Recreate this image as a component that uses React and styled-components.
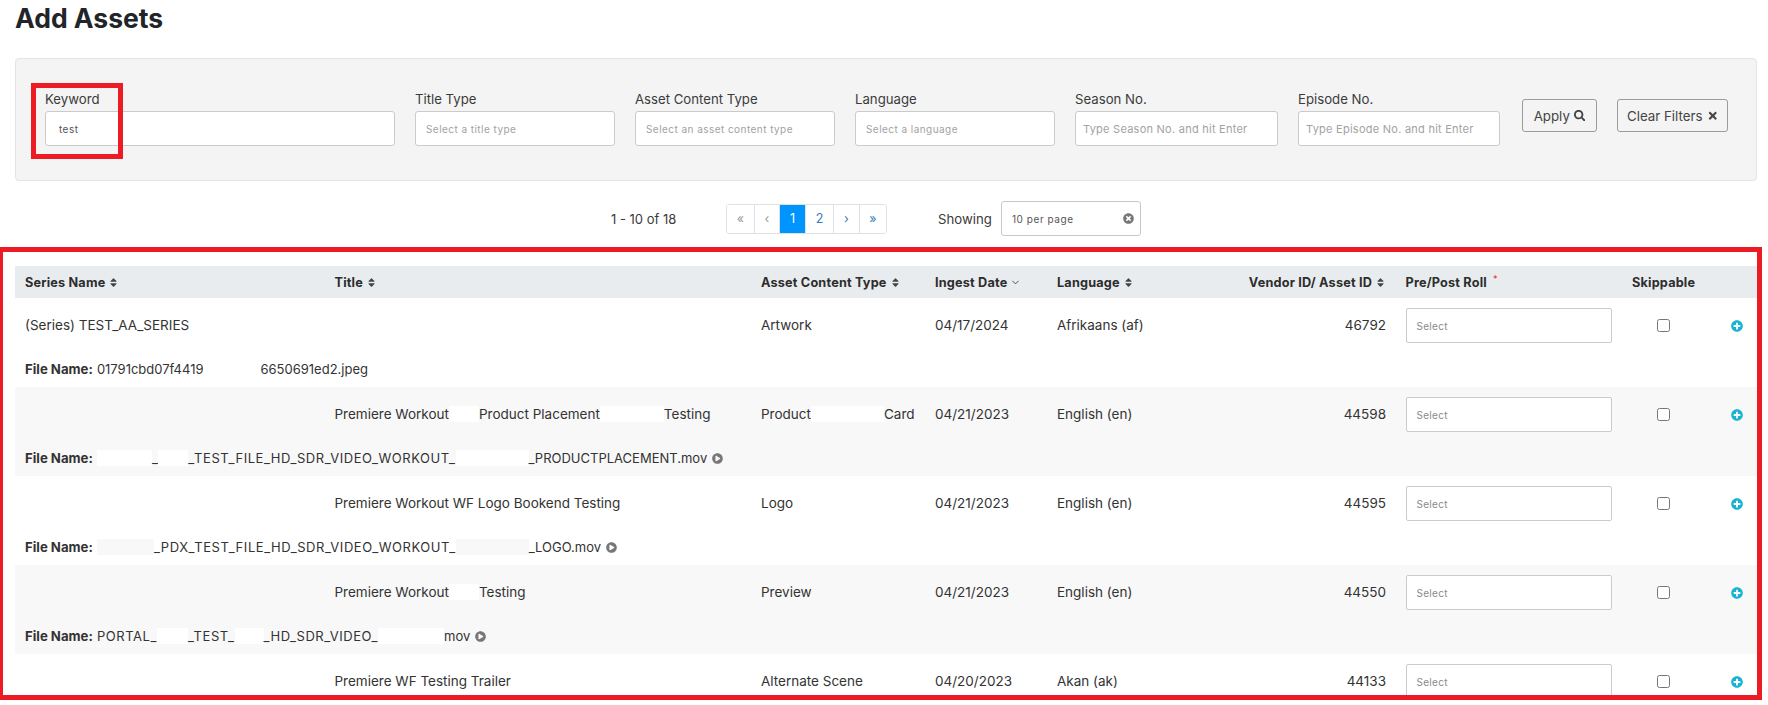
import React from 'react';
import styled, { createGlobalStyle } from 'styled-components';
import { FaSort, FaSearch, FaTimes, FaPlusCircle, FaPlayCircle, FaTimesCircle } from 'react-icons/fa';
import { LuChevronDown } from 'react-icons/lu';

const Global = createGlobalStyle`
  html, body { margin: 0; padding: 0; background: #fff; overflow: hidden; }
  body { font-family: Inter, "Open Sans", sans-serif; color: #333; }
  * { box-sizing: border-box; }
`;
const Page = styled.div`width: 1768px; height: 705px; overflow: hidden;`;
const Heading = styled.h1`
  margin: 0; height: 58px; padding: 2px 0 0 15px;
  font-size: 26.5px; line-height: 32px; font-weight: 700; color: #212529;
`;
const Panel = styled.section`
  position: relative; display: flex; align-items: flex-start;
  margin-left: 15px; width: 1742px; height: 123px; padding: 32px 0 0 29px;
  background: #f4f4f4; border: 1px solid #e4e4e4; border-radius: 4px;
`;
const Field = styled.div`
  width: ${p => p.$w}px; margin-right: ${p => p.$gap ?? 20}px;
  display: flex; flex-direction: column; gap: 3px;
`;
const Label = styled.label`font-size: 13.2px; line-height: 17px; color: #3b3b3b; white-space: nowrap;`;
const Control = styled.div`
  height: 35px; display: flex; align-items: center; padding-left: ${p => p.$pad ?? 10}px;
  background: #fff; border: 1px solid #cbcbcb; border-radius: 3px;
  font-size: ${p => p.$fs ?? 10}px; letter-spacing: ${p => p.$ls ?? 0.45}px;
  color: ${p => p.$dark ? '#555' : '#a2a2a2'}; white-space: nowrap; overflow: hidden;
`;
const GhostButton = styled.button`
  height: 33px; width: ${p => p.$w}px; margin: 8px ${p => p.$gap ?? 0}px 0 0; padding: 0;
  display: flex; align-items: center; justify-content: center; gap: 4px;
  background: transparent; border: 1px solid #9b9b9b; border-radius: 3px;
  font-family: inherit; font-size: 13.3px; color: #444;
  svg { font-size: 11.5px; flex: none; }
`;
const Highlight = styled.div`
  position: absolute; left: 15px; top: 24px; width: 92px; height: 76px;
  border: 5px solid #ed1c24; pointer-events: none;
`;
const PagerRow = styled.div`
  display: flex; align-items: center; height: 35px; margin-top: 20px; padding-left: 611px;
  font-size: 13px; color: #3a3a3a;
`;
const Range = styled.span`width: 115px; white-space: nowrap;`;
const Pager = styled.div`
  display: flex; height: 30px; width: 161px; border: 1px solid #dee2e6; border-radius: 3px; overflow: hidden;
`;
const PageCell = styled.span`
  width: ${p => p.$w}px; display: flex; align-items: center; justify-content: center;
  border-right: 1px solid #dee2e6; font-size: 12.5px;
  color: ${p => p.$active ? '#fff' : p.$muted ? '#999' : '#3a7bbd'};
  background: ${p => p.$active ? '#0094ff' : '#fff'};
  &:last-child { border-right: 0; }
`;
const Showing = styled.span`margin-left: 51px; width: 63px; font-size: 13.2px;`;
const PerPage = styled.div`
  position: relative; width: 140px; height: 35px; padding-left: 10px; display: flex; align-items: center;
  border: 1px solid #c8c8c8; border-radius: 3px; font-size: 10px; letter-spacing: .55px; color: #555;
  svg { position: absolute; right: 6px; top: 11px; font-size: 11px; color: #777; }
`;
const Frame = styled.section`
  width: 1762px; height: 453px; margin-top: 11px; padding: 14px 0 0 12px; overflow: hidden;
  border: solid #ed1c24; border-width: 5px 5px 5px 3px;
`;
const cols = '309.5px 426.5px 174px 122px 140px 208.5px 226.5px 85px 1fr';
const HeaderRow = styled.div`
  display: grid; grid-template-columns: ${cols}; align-items: center; height: 32px; padding-left: 10px;
  background: #e9ecef; font-size: 12.7px; font-weight: 700; letter-spacing: .18px; color: #2d2d2d;
`;
const HeadCell = styled.div`
  display: flex; align-items: center; gap: 3px; white-space: nowrap;
  ${p => p.$right && 'justify-content: flex-end; padding-right: 19.5px;'}
  svg { font-size: 11px; color: #444; flex: none; }
`;
const Star = styled.sup`color: #ed1c24; font-size: 9px; margin: -8px 0 0 3px; font-weight: 400;`;
const Row = styled.div`
  height: 89px; padding-left: 10px; background: ${p => p.$stripe ? '#f8f8f8' : '#fff'};
`;
const MainLine = styled.div`
  display: grid; grid-template-columns: ${cols}; align-items: center; height: 55px;
  font-size: 13.5px; color: #333;
`;
const Cell = styled.div`
  white-space: nowrap; padding-bottom: 2px;
  ${p => p.$right && 'text-align: right; padding-right: 19.5px;'}
`;
const SplitCell = styled.div`display: flex; align-items: center; white-space: nowrap; padding-bottom: 2px;`;
const RowSelect = styled.div`
  width: 206.5px; height: 35px; display: flex; align-items: center; padding-left: 10px;
  background: #fff; border: 1px solid #cbcbcb; border-radius: 2px; font-size: 10px; letter-spacing: .3px; color: #8a8a8a;
`;
const Check = styled.input.attrs({ type: 'checkbox' })`
  width: 13px; height: 13px; margin: 0 0 0 25px; accent-color: #555;
`;
const Add = styled.span`
  display: flex; justify-content: flex-end; padding-right: 14px; font-size: 12px; color: #17b4d2;
`;
const FileLine = styled.div`
  display: flex; align-items: center; height: 30px; margin-top: 1px; font-size: 13px; color: #333; white-space: nowrap;
  b { font-weight: 700; font-size: 13.2px; margin-right: 4px; }
`;
const Caps = styled.span`letter-spacing: .55px;`;
const Redact = styled.span`
  display: inline-block; flex: none; width: ${p => p.$w}px; height: 16px;
  background: ${p => p.$tone ?? '#fff'};
`;
const Play = styled(FaPlayCircle)`margin-left: 5px; font-size: 11px; color: #777;`;

const sortIcon = <FaSort />;

const Controls = () => (
  <><RowSelect>Select</RowSelect><Check /><Add><FaPlusCircle /></Add></>
);

function Rows() {
  return (
    <>
      <Row>
        <MainLine>
          <Cell>(Series) TEST_AA_SERIES</Cell><Cell /><Cell>Artwork</Cell><Cell>04/17/2024</Cell><Cell>Afrikaans (af)</Cell>
          <Cell $right>46792</Cell><Controls />
        </MainLine>
        <FileLine><b>File Name:</b>01791cbd07f4419<Redact $w={57} />6650691ed2.jpeg</FileLine>
      </Row>
      <Row $stripe>
        <MainLine>
          <Cell /><SplitCell>Premiere Workout<Redact $w={30} />Product Placement<Redact $w={64} />Testing</SplitCell>
          <SplitCell>Product<Redact $w={73} />Card</SplitCell><Cell>04/21/2023</Cell><Cell>English (en)</Cell>
          <Cell $right>44598</Cell><Controls />
        </MainLine>
        <FileLine><b>File Name:</b><Redact $w={55} /><Caps>_</Caps><Redact $w={30} /><Caps>_TEST_FILE_HD_SDR_VIDEO_WORKOUT_</Caps><Redact $w={73} />_PRODUCTPLACEMENT.mov<Play /></FileLine>
      </Row>
      <Row>
        <MainLine>
          <Cell /><Cell>Premiere Workout WF Logo Bookend Testing</Cell><Cell>Logo</Cell><Cell>04/21/2023</Cell><Cell>English (en)</Cell>
          <Cell $right>44595</Cell><Controls />
        </MainLine>
        <FileLine><b>File Name:</b><Redact $w={57} $tone="#f8f8f8" /><Caps>_PDX_TEST_FILE_HD_SDR_VIDEO_WORKOUT_</Caps><Redact $w={73} $tone="#f8f8f8" />_LOGO.mov<Play /></FileLine>
      </Row>
      <Row $stripe>
        <MainLine>
          <Cell /><SplitCell>Premiere Workout<Redact $w={30} />Testing</SplitCell><Cell>Preview</Cell><Cell>04/21/2023</Cell><Cell>English (en)</Cell>
          <Cell $right>44550</Cell><Controls />
        </MainLine>
        <FileLine><b>File Name:</b><Caps>PORTAL_</Caps><Redact $w={31} /><Caps>_TEST_</Caps><Redact $w={29} /><Caps>_HD_SDR_VIDEO_</Caps><Redact $w={66} />mov<Play /></FileLine>
      </Row>
      <Row>
        <MainLine>
          <Cell /><Cell>Premiere WF Testing Trailer</Cell><Cell>Alternate Scene</Cell><Cell>04/20/2023</Cell><Cell>Akan (ak)</Cell>
          <Cell $right>44133</Cell><Controls />
        </MainLine>
      </Row>
    </>
  );
}

export default function App() {
  return (
    <Page>
      <Global />
      <Heading>Add Assets</Heading>
      <Panel>
        <Highlight />
        <Field $w={350}><Label>Keyword</Label><Control $dark $pad={13}>test</Control></Field>
        <Field $w={200}><Label>Title Type</Label><Control>Select a title type</Control></Field>
        <Field $w={200}><Label>Asset Content Type</Label><Control>Select an asset content type</Control></Field>
        <Field $w={200}><Label>Language</Label><Control>Select a language</Control></Field>
        <Field $w={203}><Label>Season No.</Label><Control $pad={7} $fs={11} $ls={0.25}>Type Season No. and hit Enter</Control></Field>
        <Field $w={202} $gap={22}><Label>Episode No.</Label><Control $pad={7} $fs={11} $ls={0.25}>Type Episode No. and hit Enter</Control></Field>
        <GhostButton $w={75} $gap={20}>Apply <FaSearch /></GhostButton>
        <GhostButton $w={111}>Clear Filters <FaTimes /></GhostButton>
      </Panel>
      <PagerRow>
        <Range>1 - 10 of 18</Range>
        <Pager>
          <PageCell $w={28} $muted>«</PageCell><PageCell $w={25} $muted>‹</PageCell><PageCell $w={26} $active>1</PageCell>
          <PageCell $w={28}>2</PageCell><PageCell $w={26}>›</PageCell><PageCell $w={26}>»</PageCell>
        </Pager>
        <Showing>Showing</Showing>
        <PerPage>10 per page<FaTimesCircle /></PerPage>
      </PagerRow>
      <Frame>
        <HeaderRow>
          <HeadCell>Series Name {sortIcon}</HeadCell>
          <HeadCell>Title {sortIcon}</HeadCell>
          <HeadCell>Asset Content Type {sortIcon}</HeadCell>
          <HeadCell>Ingest Date <LuChevronDown /></HeadCell>
          <HeadCell>Language {sortIcon}</HeadCell>
          <HeadCell $right>Vendor ID/ Asset ID {sortIcon}</HeadCell>
          <HeadCell>Pre/Post Roll<Star>*</Star></HeadCell>
          <HeadCell>Skippable</HeadCell>
          <HeadCell />
        </HeaderRow>
        <Rows />
      </Frame>
    </Page>
  );
}
